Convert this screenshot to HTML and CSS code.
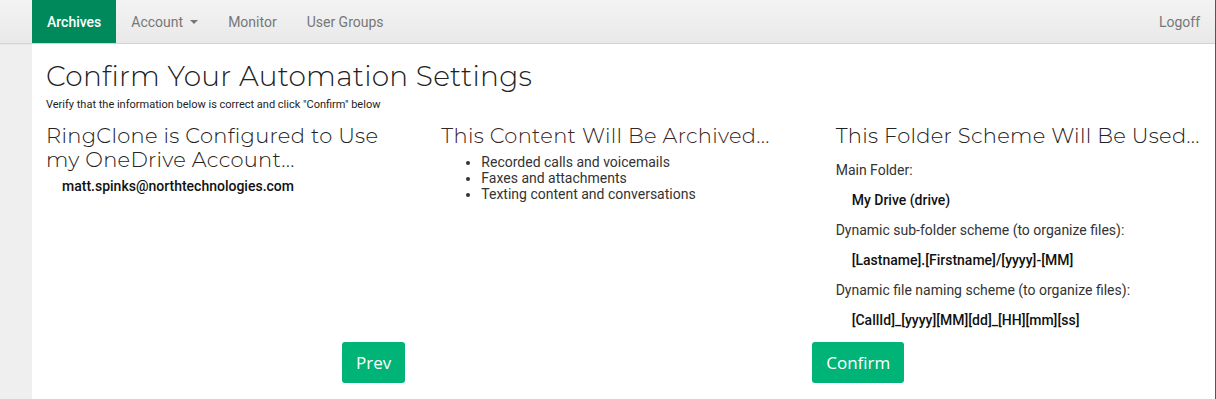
FILE: index.html
```html
<!DOCTYPE html>
<html lang="en">
<head>
    <meta charset="UTF-8">
    <meta name="viewport" content="width=device-width, initial-scale=1.0">
    <title>Confirm Your Automation Settings</title>
    <link rel="stylesheet" href="styles.css">
</head>
<body>
    <nav class="navbar">
        <div class="nav-left">
            <a class="nav-item active">Archives</a>
            <a class="nav-item">Account <span class="caret"></span></a>
            <a class="nav-item">Monitor</a>
            <a class="nav-item">User Groups</a>
        </div>
        <a class="nav-item">Logoff</a>
    </nav>

    <div class="page">
        <div class="content">
            <h1>Confirm Your Automation Settings</h1>
            <p class="subtitle">Verify that the information below is correct and click "Confirm" below</p>

            <div class="columns">
                <div class="col">
                    <h3>RingClone is Configured to Use my OneDrive Account...</h3>
                    <div class="account">matt.spinks@northtechnologies.com</div>
                </div>
                <div class="col">
                    <h3 class="archived">This Content Will Be Archived...</h3>
                    <ul class="content-list">
                        <li>Recorded calls and voicemails</li>
                        <li>Faxes and attachments</li>
                        <li>Texting content and conversations</li>
                    </ul>
                </div>
                <div class="col">
                    <h3>This Folder Scheme Will Be Used...</h3>
                    <p class="label">Main Folder:</p>
                    <p class="value">My Drive (drive)</p>
                    <p class="label">Dynamic sub-folder scheme (to organize files):</p>
                    <p class="value">[Lastname].[Firstname]/[yyyy]-[MM]</p>
                    <p class="label">Dynamic file naming scheme (to organize files):</p>
                    <p class="value">[CallId]_[yyyy][MM][dd]_[HH][mm][ss]</p>
                </div>
            </div>

            <div class="actions">
                <button class="btn btn-prev">Prev</button>
                <button class="btn btn-confirm">Confirm</button>
            </div>
        </div>
    </div>
</body>
</html>
```
FILE: styles.css
```css
* {
    box-sizing: border-box;
}
html, body {
    height: 100%;
}
body {
    margin: 0;
    font-family: Roboto, "Liberation Sans", sans-serif;
    font-size: 14px;
    color: #333;
    background: #efefef;
    border-right: 1px solid #555;
    overflow: hidden;
}
.navbar {
    display: flex;
    justify-content: space-between;
    height: 44px;
    padding: 0 0 0 32px;
    background: linear-gradient(to bottom, #f3f3f3, #e9e9e9);
    border-bottom: 1px solid #d3d3d3;
    box-shadow: 0 1px 2px rgba(0,0,0,0.04);
}
.nav-left {
    display: flex;
}
.nav-item {
    display: flex;
    align-items: center;
    padding: 0 15px;
    color: #777;
    font-size: 14px;
    text-decoration: none;
}
.nav-item.active {
    background: #008a5b;
    color: white;
    font-weight: 500;
}
.caret {
    display: inline-block;
    margin-left: 7px;
    border-top: 4px solid #777;
    border-left: 4px solid transparent;
    border-right: 4px solid transparent;
}
.page {
    height: calc(100% - 44px);
    padding-left: 32px;
}
.content {
    height: 100%;
    background: white;
    padding: 14px 14px 0 14px;
}
h1 {
    margin: 0;
    font-family: Montserrat, "Open Sans", sans-serif;
    font-weight: 300;
    font-size: 28px;
    letter-spacing: 0.25px;
    color: #222;
    line-height: 36px;
}
.subtitle {
    margin: 4px 0 0 0;
    font-size: 11px;
    line-height: 14px;
    color: #222;
}
.columns {
    display: grid;
    grid-template-columns: repeat(3, 1fr);
    margin: 12px -14px 0 -14px;
}
.col {
    padding: 0 14px 0 14px;
}
.col:nth-child(n+2) {
    padding-left: 15px;
}
h3 {
    margin: 0;
    font-family: Montserrat, "Open Sans", sans-serif;
    font-weight: 300;
    font-size: 21px;
    letter-spacing: 0.3px;
    line-height: 24px;
    color: #222;
}
h3.archived {
    color: #3a2424;
}
.account {
    margin: 6px 0 0 16px;
    font-weight: 500;
    color: #111;
}
.content-list {
    margin: 6px 0 0 0;
    padding-left: 40px;
    line-height: 16px;
}
.label {
    margin: 10px 0 0 0;
    line-height: 20px;
}
h3 + .label {
    margin-top: 12px;
}
.value {
    margin: 10px 0 0 16px;
    line-height: 20px;
    font-weight: 500;
    color: #111;
}
.actions {
    display: flex;
    margin-top: 12px;
    padding-left: 296px;
}
.btn {
    height: 41px;
    padding: 0 14px;
    background: #00b377;
    color: white;
    border: none;
    border-radius: 3px;
    font-family: "Open Sans", sans-serif;
    font-size: 17px;
    cursor: pointer;
}
.btn-confirm {
    margin-left: 407px;
}
```
